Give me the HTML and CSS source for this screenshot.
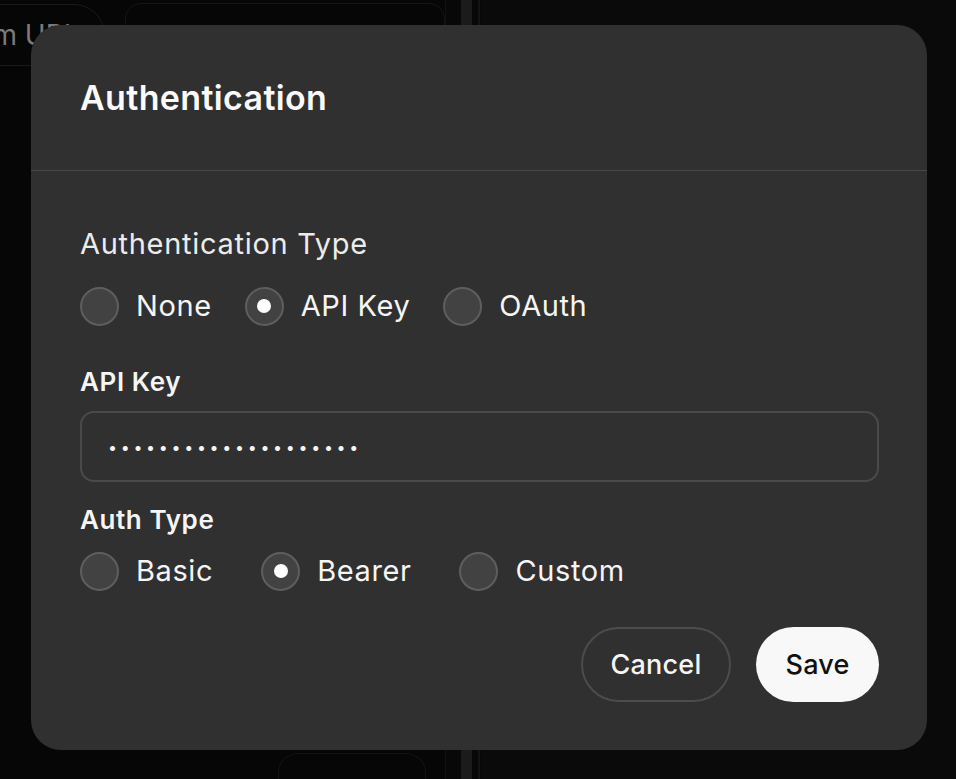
FILE: index.html
```html
<!DOCTYPE html>
<html lang="en">
<head>
<meta charset="utf-8">
<title>Authentication</title>
<link rel="stylesheet" href="styles.css">
</head>
<body>
<div class="page">
  <div class="page-main">
    <div class="page-top">
      <div class="bg-pill">Custom URL</div>
      <div class="bg-box"></div>
    </div>
    <div class="page-bottom">
      <div class="bg-box-bottom"></div>
    </div>
  </div>
  <div class="page-rail">
    <div class="rail-thin"></div>
    <div class="rail-bar"></div>
    <div class="rail-line"></div>
  </div>
  <div class="page-side"></div>
</div>

<div class="overlay">
  <div class="dialog">
    <div class="dialog-header">
      <h1 class="dialog-title">Authentication</h1>
    </div>
    <div class="dialog-body">
      <div class="section-label">Authentication Type</div>
      <div class="radio-row row-one">
        <div class="radio"><span class="radio-circle"></span><span class="radio-text">None</span></div>
        <div class="radio"><span class="radio-circle checked"></span><span class="radio-text">API Key</span></div>
        <div class="radio"><span class="radio-circle"></span><span class="radio-text">OAuth</span></div>
      </div>
      <div class="field-label label-apikey">API Key</div>
      <div class="text-input"><span class="dots">••••••••••••••••••••</span></div>
      <div class="field-label label-authtype">Auth Type</div>
      <div class="radio-row row-two">
        <div class="radio"><span class="radio-circle"></span><span class="radio-text">Basic</span></div>
        <div class="radio"><span class="radio-circle checked"></span><span class="radio-text">Bearer</span></div>
        <div class="radio"><span class="radio-circle"></span><span class="radio-text">Custom</span></div>
      </div>
      <div class="actions">
        <button class="btn btn-cancel">Cancel</button>
        <button class="btn btn-save">Save</button>
      </div>
    </div>
  </div>
</div>
</body>
</html>
```

FILE: styles.css
```css
* { box-sizing: border-box; }

html, body {
  margin: 0;
  padding: 0;
  width: 956px;
  height: 779px;
  overflow: hidden;
  background: #080808;
  font-family: Inter, "Noto Sans", "Liberation Sans", sans-serif;
}

/* background page (dimmed behind the modal) */
.page {
  display: flex;
  width: 956px;
  height: 779px;
}
.page-main {
  width: 445px;
  display: flex;
  flex-direction: column;
  justify-content: space-between;
  background: #060606;
}
.page-top {
  display: flex;
  gap: 20px;
  padding-top: 4px;
}
.bg-pill {
  margin-left: -110px;
  width: 215px;
  height: 62px;
  border: 1px solid #1a1a1a;
  border-radius: 31px;
  color: #7a7a7a;
  font-size: 28px;
  line-height: 60px;
  padding-left: 24px;
  white-space: nowrap;
  overflow: hidden;
}
.bg-box {
  width: 320px;
  height: 90px;
  margin-top: -1px;
  border: 1px solid #151515;
  border-radius: 16px;
}
.page-bottom {
  padding-left: 278px;
}
.bg-box-bottom {
  width: 148px;
  height: 40px;
  margin-bottom: -14px;
  border: 1px solid #131313;
  border-bottom: none;
  border-radius: 20px 20px 0 0;
}
.page-rail {
  width: 36px;
  display: flex;
  background: #080808;
}
.rail-thin {
  width: 1px;
  background: #111;
}
.rail-bar {
  width: 11px;
  margin-left: 15px;
  background: #1b1b1b;
}
.rail-line {
  width: 2px;
  margin-left: 6px;
  background: #141414;
}
.page-side {
  flex: 1;
  background: #0a0a0a;
}

/* modal */
.overlay {
  position: absolute;
  inset: 0;
}
.dialog {
  position: absolute;
  left: 31px;
  top: 25px;
  width: 896px;
  height: 725px;
  background: #303030;
  border-radius: 30px;
  color: #f5f5f5;
  display: flex;
  flex-direction: column;
}
.dialog-header {
  height: 146px;
  padding: 0 49px;
  display: flex;
  align-items: center;
  border-bottom: 1px solid #474747;
  flex-shrink: 0;
}
.dialog-title {
  margin: 0;
  font-size: 34px;
  font-weight: 600;
  letter-spacing: 0.35px;
  color: #fafafa;
}
.dialog-body {
  padding: 0 48px 0 49px;
  display: flex;
  flex-direction: column;
}
.section-label {
  margin-top: 56px;
  font-size: 29px;
  line-height: 34px;
  letter-spacing: 0.7px;
  color: #ececec;
}
.radio-row {
  display: flex;
  align-items: center;
  height: 40px;
}
.row-one {
  margin-top: 25px;
  gap: 33px;
}
.row-two {
  margin-top: 16px;
  gap: 48px;
}
.radio {
  display: flex;
  align-items: center;
  gap: 17px;
}
.radio-circle {
  width: 39px;
  height: 39px;
  border-radius: 50%;
  background: #424242;
  border: 2px solid #5e5e5e;
  display: flex;
  align-items: center;
  justify-content: center;
}
.radio-circle.checked::after {
  content: "";
  width: 14px;
  height: 14px;
  border-radius: 50%;
  background: #ffffff;
}
.radio-text {
  font-size: 29px;
  line-height: 34px;
  letter-spacing: 0.6px;
  color: #f5f5f5;
}
.field-label {
  font-size: 26px;
  line-height: 30px;
  font-weight: 600;
  letter-spacing: 0.6px;
  color: #f5f5f5;
}
.label-apikey {
  margin-top: 41px;
}
.label-authtype {
  margin-top: 23px;
}
.text-input {
  margin-top: 14px;
  height: 71px;
  border: 2px solid #4a4a4a;
  border-radius: 14px;
  display: flex;
  align-items: center;
  padding-left: 26px;
}
.dots {
  font-size: 16px;
  letter-spacing: 3.7px;
  color: #f5f5f5;
}
.actions {
  margin-top: 36px;
  display: flex;
  justify-content: flex-end;
  gap: 25px;
}
.btn {
  height: 75px;
  border-radius: 38px;
  font-family: inherit;
  font-size: 27px;
  font-weight: 500;
  letter-spacing: 0.2px;
  cursor: pointer;
}
.btn-cancel {
  width: 150px;
  background: transparent;
  color: #f5f5f5;
  border: 2px solid #4c4c4c;
}
.btn-save {
  width: 123px;
  background: #f8f8f8;
  color: #111;
  border: none;
}
```
